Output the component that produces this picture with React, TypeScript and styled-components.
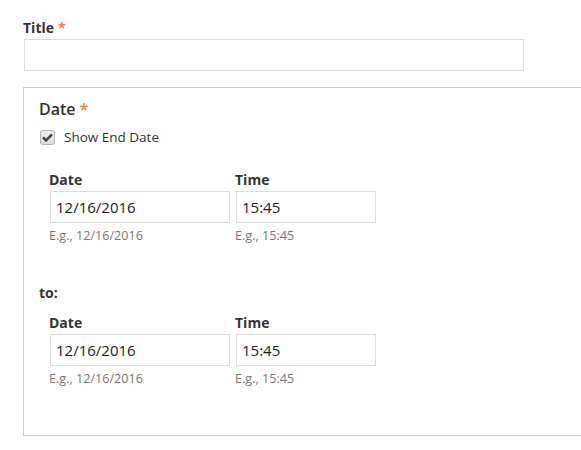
import React from "react";
import styled, { createGlobalStyle } from "styled-components";

const GlobalStyle = createGlobalStyle`
  body {
    margin: 0;
    background: #fff;
    font-family: "Open Sans", "DejaVu Sans", sans-serif;
    color: #222;
  }
`;

const Page = styled.div`
  padding: 18px 0 0 23px;
  overflow: hidden;
`;

const Label = styled.div`
  font-size: 14px;
  font-weight: 700;
  line-height: 20px;
  color: #333;
`;

const Required = styled.span`
  color: #f0813c;
  margin-left: 4px;
`;

const TextInput = styled.div<{ width: number }>`
  box-sizing: border-box;
  width: ${({ width }) => width}px;
  height: 32px;
  border: 1px solid #ddd;
  padding: 0 5px;
  display: flex;
  align-items: center;
  font-size: 15px;
  color: #222;
  background: #fff;
`;

const TitleInput = styled(TextInput)`
  margin: 1px 0 0 1px;
`;

const Fieldset = styled.div`
  margin-top: 16px;
  margin-right: -20px;
  border: 1px solid #ccc;
  border-right: none;
  height: 349px;
  box-sizing: border-box;
  padding: 10px 0 0 15px;
`;

const Legend = styled.div`
  font-size: 16px;
  font-weight: 600;
  line-height: 22px;
  color: #333;
`;

const CheckRow = styled.label`
  display: flex;
  align-items: center;
  gap: 9px;
  margin-top: 8px;
  font-size: 13.5px;
  color: #333;
`;

const CheckBox = styled.span`
  width: 15px;
  height: 15px;
  box-sizing: border-box;
  border: 1px solid #b4b4b4;
  border-radius: 3px;
  background: linear-gradient(#f0f0f0, #dcdcdc);
  display: flex;
  align-items: center;
  justify-content: center;
  margin-left: 1px;
`;

const Group = styled.div<{ top: number }>`
  display: flex;
  gap: 5px;
  margin: ${({ top }) => top}px 0 0 10px;
`;

const Field = styled.div`
  display: flex;
  flex-direction: column;
`;

const FieldInput = styled(TextInput)`
  margin: 1px 0 0 1px;
`;

const Hint = styled.div`
  font-size: 12.6px;
  color: #777;
  margin-top: 5px;
  line-height: 16px;
`;

const ToLabel = styled(Label)`
  margin-top: 39px;
`;

const DateTime = ({ top }: { top: number }) => (
  <Group top={top}>
    <Field>
      <Label>Date</Label>
      <FieldInput width={180}>12/16/2016</FieldInput>
      <Hint>E.g., 12/16/2016</Hint>
    </Field>
    <Field>
      <Label>Time</Label>
      <FieldInput width={140}>15:45</FieldInput>
      <Hint>E.g., 15:45</Hint>
    </Field>
  </Group>
);

export default function App() {
  return (
    <Page>
      <GlobalStyle />
      <Label>
        Title<Required>*</Required>
      </Label>
      <TitleInput width={500} />
      <Fieldset>
        <Legend>
          Date<Required>*</Required>
        </Legend>
        <CheckRow>
          <CheckBox>
            <svg width="11" height="9" viewBox="0 0 11 9">
              <path d="M1 4.4 L4 7.4 L10 1.4" fill="none" stroke="#444" strokeWidth="2.6" />
            </svg>
          </CheckBox>
          Show End Date
        </CheckRow>
        <DateTime top={24} />
        <ToLabel>to:</ToLabel>
        <DateTime top={10} />
      </Fieldset>
    </Page>
  );
}
